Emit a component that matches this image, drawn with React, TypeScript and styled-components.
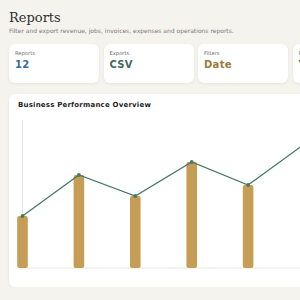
import React from "react";
import styled, { createGlobalStyle } from "styled-components";

/* Global */
/* ************************************************************************** */
const GlobalStyle = createGlobalStyle`
  html, body {
    margin: 0;
    padding: 0;
    background: #f5f3ee;
    overflow: hidden;
  }
  body {
    font-family: "DejaVu Sans", "Noto Sans", sans-serif;
  }
`;

/* Styled Components */
/* ************************************************************************** */
const Page = styled.div`
  width: 420px;
  padding: 9px 0 0 9px;
  box-sizing: border-box;
`;

const Title = styled.h1`
  margin: 0;
  font-family: "DejaVu Serif", "Liberation Serif", serif;
  font-weight: 400;
  font-size: 13px;
  line-height: 17px;
  color: #2f2f2f;
`;

const Subtitle = styled.p`
  margin: 1px 0 0;
  font-size: 6px;
  line-height: 8px;
  color: #7a7a7a;
`;

const StatRow = styled.div`
  display: flex;
  gap: 4.5px;
  margin-top: 9px;
`;

const StatCard = styled.div`
  flex: none;
  width: 90px;
  height: 39px;
  box-sizing: border-box;
  padding: 6px 6px;
  background: #fff;
  border-radius: 6px;
  box-shadow: 0 1px 3px rgba(60, 50, 30, 0.08);
`;

const StatLabel = styled.div`
  font-size: 5.2px;
  line-height: 6px;
  color: #6e6e6e;
`;

const StatValue = styled.div<{ $color: string }>`
  margin-top: 3px;
  font-size: 10px;
  line-height: 12px;
  font-weight: 700;
  letter-spacing: 0.3px;
  color: ${(p) => p.$color};
`;

const ChartCard = styled.div`
  margin-top: 11px;
  width: 400px;
  height: 193px;
  background: #fff;
  border-radius: 6px;
  box-shadow: 0 1px 3px rgba(60, 50, 30, 0.08);
  overflow: hidden;
`;

const ChartTitle = styled.h2`
  margin: 0;
  padding: 6px 0 0 9px;
  font-size: 7px;
  line-height: 10px;
  font-weight: 700;
  letter-spacing: 0.2px;
  color: #1f1f1f;
`;

const ChartSvg = styled.svg`
  display: block;
  margin-top: 6px;
`;

/* Data */
/* ************************************************************************** */
const stats = [
  { label: "Reports", value: "12", color: "#3a6b9b" },
  { label: "Exports", value: "CSV", color: "#3f6b5f" },
  { label: "Filters", value: "Date", color: "#9a7b3d" },
  { label: "Period", value: "Year", color: "#3f6b5f" },
];

const points = [100, 59, 80, 46, 69, 28, 40];

/* App */
/* ************************************************************************** */
export default function App() {
  const step = 56.4;
  const x0 = 13.5;
  const base = 152;
  const coords = points.map((y, i) => [x0 + i * step, y] as const);

  return (
    <>
      <GlobalStyle />
      <Page>
        <Title>Reports</Title>
        <Subtitle>
          Filter and export revenue, jobs, invoices, expenses and operations reports.
        </Subtitle>
        <StatRow>
          {stats.map((s) => (
            <StatCard key={s.label}>
              <StatLabel>{s.label}</StatLabel>
              <StatValue $color={s.color}>{s.value}</StatValue>
            </StatCard>
          ))}
        </StatRow>
        <ChartCard>
          <ChartTitle>Business Performance Overview</ChartTitle>
          <ChartSvg width="400" height="160" viewBox="0 0 400 160">
            <line x1={x0} y1={4} x2={x0} y2={base} stroke="#e6e6e3" strokeWidth="1" />
            <line x1={x0} y1={base} x2={400} y2={base} stroke="#e6e6e3" strokeWidth="1" />
            {coords.map(([x, y], i) => (
              <rect
                key={i}
                x={x - 5.3 + (i === 5 ? 1 : 0)}
                y={y}
                width={10.6}
                height={base - y}
                rx={2}
                fill="#c69d57"
              />
            ))}
            <polyline
              points={coords.map(([x, y]) => `${x},${y}`).join(" ")}
              fill="none"
              stroke="#477a62"
              strokeWidth="1.3"
            />
            {coords.map(([x, y], i) => (
              <circle key={i} cx={x} cy={y} r={1.9} fill="#477a62" />
            ))}
          </ChartSvg>
        </ChartCard>
      </Page>
    </>
  );
}
